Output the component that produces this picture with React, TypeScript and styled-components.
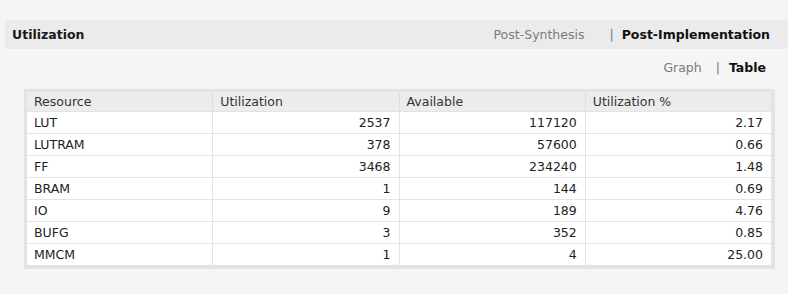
import React from 'react';
import styled, { createGlobalStyle } from 'styled-components';

const GlobalStyle = createGlobalStyle`
  html, body {
    margin: 0;
    padding: 0;
    background: #f5f5f5;
    font-family: "DejaVu Sans", Verdana, sans-serif;
    font-size: 12.5px;
    color: #222;
  }
`;

const Page = styled.div`
  padding: 20px 0 24px 5px;
`;

const TitleBar = styled.div`
  display: flex;
  align-items: center;
  justify-content: space-between;
  height: 29px;
  padding: 0 18px 0 7px;
  background: #ebebeb;
`;

const Title = styled.h2`
  margin: 0;
  font-size: 12.5px;
  font-weight: bold;
  color: #1a1a1a;
`;

const Tabs = styled.div`
  display: flex;
  align-items: center;
`;

const Tab = styled.span<{ $active?: boolean }>`
  font-weight: ${(p) => (p.$active ? 'bold' : 'normal')};
  color: ${(p) => (p.$active ? '#111' : '#7a7a7a')};
  cursor: pointer;
`;

const Sep = styled.span<{ $before: number; $after: number }>`
  color: #777;
  margin: 0 ${(p) => p.$after}px 0 ${(p) => p.$before}px;
`;

const ViewBar = styled.div`
  display: flex;
  align-items: center;
  justify-content: flex-end;
  height: 37px;
  margin-bottom: 3px;
  padding-right: 22px;
`;

const TableFrame = styled.div`
  margin: 0 13px 0 19px;
  padding: 3px;
  background: #e3e3e3;
`;

const Table = styled.table`
  width: 100%;
  border-collapse: separate;
  border-spacing: 0;
  table-layout: fixed;
`;

const HeadCell = styled.th`
  height: 19px;
  padding: 0 7px;
  text-align: left;
  font-weight: normal;
  color: #333;
  background: #ececec;
  border-right: 1px solid #dedede;
  border-bottom: 1px solid #e3e3e3;
  &:last-child {
    border-right: 1px solid #e3e3e3;
  }
`;

const Cell = styled.td<{ $num?: boolean }>`
  height: 21px;
  padding: 0 8px 0 7px;
  text-align: ${(p) => (p.$num ? 'right' : 'left')};
  color: #222;
  background: #fff;
  border-right: 1px solid #e3e3e3;
  border-bottom: 1px solid #e3e3e3;
  white-space: nowrap;
`;

const rows: [string, number, number, string][] = [
  ['LUT', 2537, 117120, '2.17'],
  ['LUTRAM', 378, 57600, '0.66'],
  ['FF', 3468, 234240, '1.48'],
  ['BRAM', 1, 144, '0.69'],
  ['IO', 9, 189, '4.76'],
  ['BUFG', 3, 352, '0.85'],
  ['MMCM', 1, 4, '25.00'],
];

const App = () => {
  return (
    <Page>
      <GlobalStyle />
      <TitleBar>
        <Title>Utilization</Title>
        <Tabs>
          <Tab>Post-Synthesis</Tab>
          <Sep $before={25} $after={8}>|</Sep>
          <Tab $active>Post-Implementation</Tab>
        </Tabs>
      </TitleBar>
      <ViewBar>
        <Tab>Graph</Tab>
        <Sep $before={14} $after={9}>|</Sep>
        <Tab $active>Table</Tab>
      </ViewBar>
      <TableFrame>
        <Table>
          <thead>
            <tr>
              <HeadCell>Resource</HeadCell>
              <HeadCell>Utilization</HeadCell>
              <HeadCell>Available</HeadCell>
              <HeadCell>Utilization %</HeadCell>
            </tr>
          </thead>
          <tbody>
            {rows.map(([name, used, avail, pct]) => (
              <tr key={name}>
                <Cell>{name}</Cell>
                <Cell $num>{used}</Cell>
                <Cell $num>{avail}</Cell>
                <Cell $num>{pct}</Cell>
              </tr>
            ))}
          </tbody>
        </Table>
      </TableFrame>
    </Page>
  );
};

export default App;
